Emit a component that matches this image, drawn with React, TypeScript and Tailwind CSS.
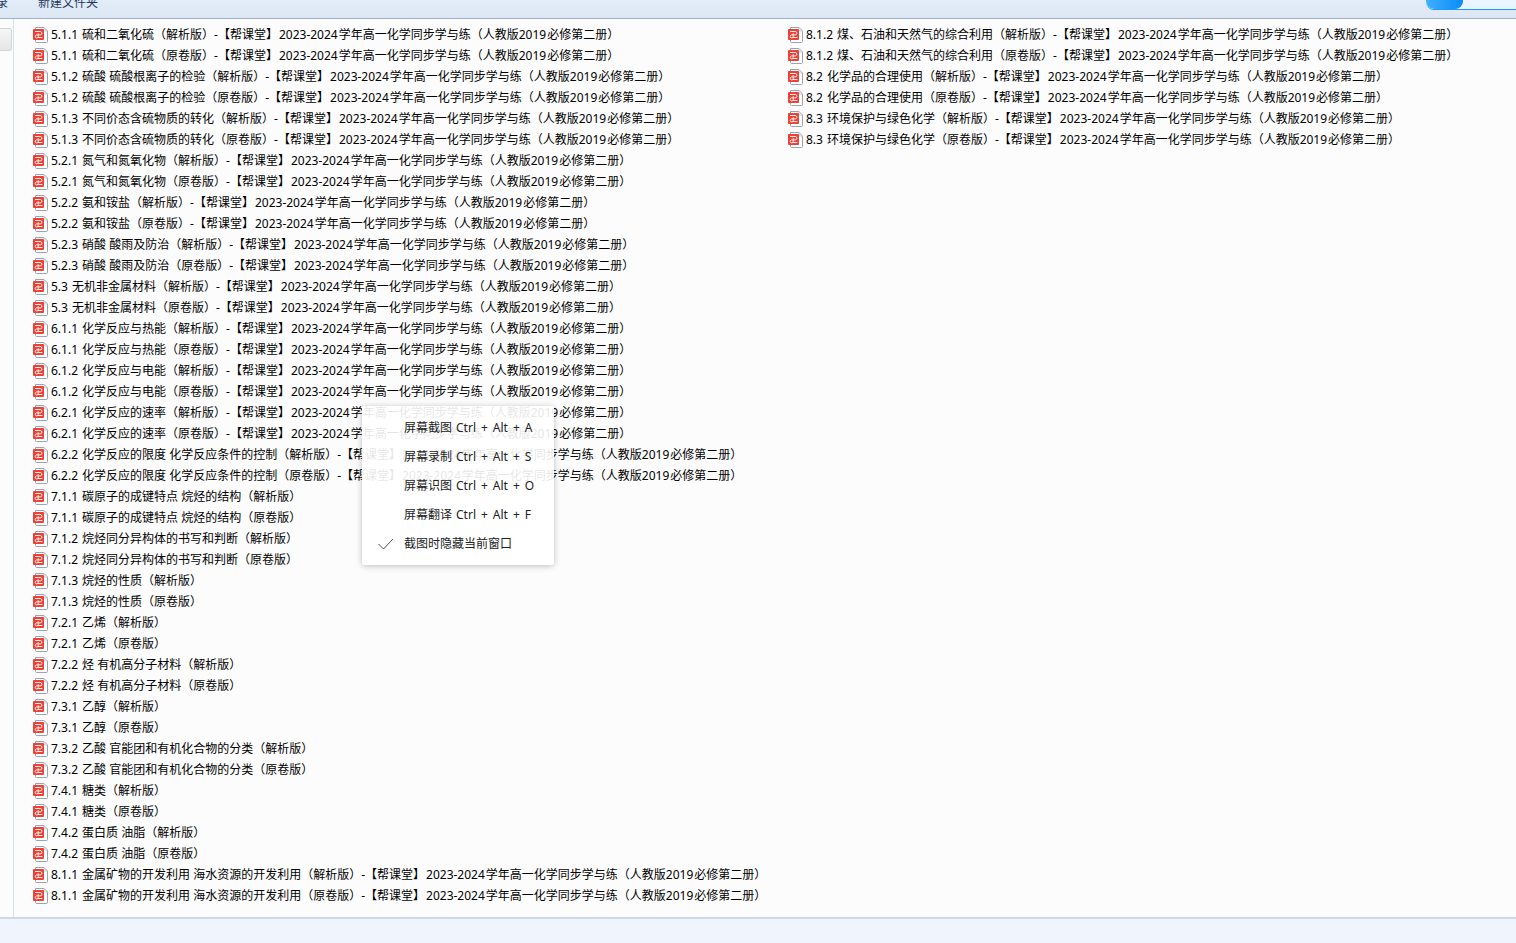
const SERIES_PARTS = ["2023-2024", "学年高一化学同步学与练（人教版2019", "必修第二册）"];

interface Lesson {
  no: string;
  title: string;
  series?: boolean;
}

const LEFT_LESSONS: Lesson[] = [
  { no: "5.1.1", title: "硫和二氧化硫", series: true },
  { no: "5.1.2", title: "硫酸 硫酸根离子的检验", series: true },
  { no: "5.1.3", title: "不同价态含硫物质的转化", series: true },
  { no: "5.2.1", title: "氮气和氮氧化物", series: true },
  { no: "5.2.2", title: "氨和铵盐", series: true },
  { no: "5.2.3", title: "硝酸 酸雨及防治", series: true },
  { no: "5.3", title: "无机非金属材料", series: true },
  { no: "6.1.1", title: "化学反应与热能", series: true },
  { no: "6.1.2", title: "化学反应与电能", series: true },
  { no: "6.2.1", title: "化学反应的速率", series: true },
  { no: "6.2.2", title: "化学反应的限度 化学反应条件的控制", series: true },
  { no: "7.1.1", title: "碳原子的成键特点 烷烃的结构" },
  { no: "7.1.2", title: "烷烃同分异构体的书写和判断" },
  { no: "7.1.3", title: "烷烃的性质" },
  { no: "7.2.1", title: "乙烯" },
  { no: "7.2.2", title: "烃 有机高分子材料" },
  { no: "7.3.1", title: "乙醇" },
  { no: "7.3.2", title: "乙酸 官能团和有机化合物的分类" },
  { no: "7.4.1", title: "糖类" },
  { no: "7.4.2", title: "蛋白质 油脂" },
  { no: "8.1.1", title: "金属矿物的开发利用 海水资源的开发利用", series: true },
];

const RIGHT_LESSONS: Lesson[] = [
  { no: "8.1.2", title: "煤、石油和天然气的综合利用", series: true },
  { no: "8.2", title: "化学品的合理使用", series: true },
  { no: "8.3", title: "环境保护与绿色化学", series: true },
];

const MENU_ITEMS = [
  { label: "屏幕截图", keys: ["Ctrl", "+", "Alt", "+", "A"] },
  { label: "屏幕录制", keys: ["Ctrl", "+", "Alt", "+", "S"] },
  { label: "屏幕识图", keys: ["Ctrl", "+", "Alt", "+", "O"] },
  { label: "屏幕翻译", keys: ["Ctrl", "+", "Alt", "+", "F"] },
  { label: "截图时隐藏当前窗口", keys: [], checked: true },
];

function PdfIcon() {
  return (
    <svg aria-hidden="true" viewBox="0 0 16 16" className="h-4 w-4 shrink-0">
      <path d="M2.5 .5H11L14.5 4v10.5a1 1 0 0 1-1 1h-10a1 1 0 0 1-1-1z" fill="#fff" stroke="#99a3b4" />
      <path d="M11 .5V3a1 1 0 0 0 1 1h2.5" fill="none" stroke="#c3c9d4" />
      <rect x="0" y="2" width="11" height="11" rx="1" fill="#ee4136" />
      <path
        d="M2.5 4.5h4.7a1.7 1.7 0 0 1 0 3.4H3.6a1.5 1.5 0 1 0 1.6 1.6V6.6M5.2 10.5H9"
        fill="none"
        stroke="#fff"
        strokeWidth="0.9"
        strokeLinecap="round"
      />
    </svg>
  );
}

function FileColumn({ lessons }: { lessons: Lesson[] }) {
  return (
    <ul>
      {lessons.flatMap((lesson) =>
        ["（解析版）", "（原卷版）"].map((version) => (
          <li key={lesson.no + version} className="flex h-[21px] items-center gap-[2px] whitespace-nowrap">
            <PdfIcon />
            <span className="flex gap-1">
              <span>{lesson.no}</span>
              <span className="flex gap-px">
                <span>
                  {lesson.title}
                  {version}
                  {lesson.series && "-【帮课堂】"}
                </span>
                {lesson.series && SERIES_PARTS.map((part) => <span key={part}>{part}</span>)}
              </span>
            </span>
          </li>
        ))
      )}
    </ul>
  );
}

function CaptureMenu() {
  return (
    <div
      role="menu"
      className="absolute left-[362px] top-[406px] w-48 rounded-[3px] bg-white/90 py-[7px] text-[#222] shadow-[0_1px_6px_rgba(0,0,0,0.25)]"
    >
      {MENU_ITEMS.map((item) => (
        <button
          key={item.label}
          type="button"
          role={item.checked ? "menuitemcheckbox" : "menuitem"}
          aria-checked={item.checked}
          className="flex h-[29px] w-full items-center whitespace-nowrap pl-4 text-left"
        >
          <span className="w-[26px] shrink-0">
            {item.checked && (
              <svg aria-hidden="true" viewBox="0 0 16 12" className="h-3 w-4">
                <path d="M0.5 6L5.5 11L15 1" fill="none" stroke="#555" />
              </svg>
            )}
          </span>
          <span className="flex gap-1">
            <span>{item.label}</span>
            <span className="flex gap-[5px]">
              {item.keys.map((key, i) => (
                <span key={i}>{key}</span>
              ))}
            </span>
          </span>
        </button>
      ))}
    </div>
  );
}

export default function App() {
  return (
    <div className="relative flex min-h-screen flex-col overflow-hidden bg-[#f0f4fc] font-['Noto_Sans','Noto_Sans_CJK_SC',sans-serif] text-xs text-black">
      <header className="flex h-[19px] items-start justify-between border-b border-[#9fb0c8] bg-[linear-gradient(#e3edf8,#dce7f5)] text-[#1e395b]">
        <div className="flex h-[11px] items-end gap-[30px]">
          <button type="button" className="flex w-2 justify-end leading-4">
            录
          </button>
          <button type="button" className="leading-4">
            新建文件夹
          </button>
        </div>
        <div className="flex h-[10px] w-[90px] overflow-hidden rounded-bl-lg border-b border-[#1d9bf5] bg-[#eaf6ff]">
          <div className="h-full w-[37px] rounded-b-lg bg-[linear-gradient(90deg,#3fb0ff,#0a8cf8)]" />
        </div>
      </header>
      <main className="flex grow bg-[#fcfcfc]">
        <aside className="w-[14px] shrink-0 border-r border-[#d6e1ee] pt-[9px]">
          <div className="h-[23px] w-3 rounded-r-[3px] border border-l-0 border-[#d4d4d4] bg-[linear-gradient(#f6f6f6,#e6e6e6)]" />
        </aside>
        <div className="grid grow grid-cols-[755px_1fr] pb-[10px] pl-[19px] pt-[5px]">
          <FileColumn lessons={LEFT_LESSONS} />
          <FileColumn lessons={RIGHT_LESSONS} />
        </div>
      </main>
      <footer className="h-[26px] border-t-2 border-[#cbd8e8]" />
      <CaptureMenu />
    </div>
  );
}
